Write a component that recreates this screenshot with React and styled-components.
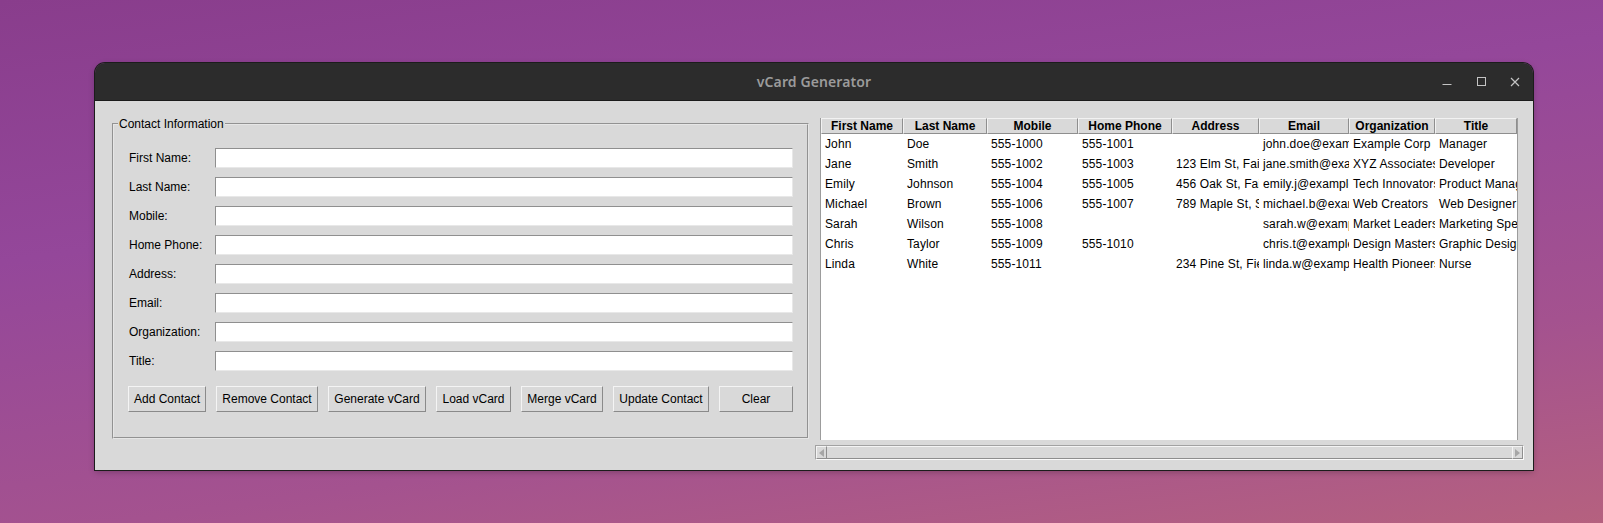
import React from "react";
import styled, { createGlobalStyle } from "styled-components";

const GlobalStyle = createGlobalStyle`
  html, body {
    margin: 0;
    padding: 0;
  }
  body {
    width: 1603px;
    height: 523px;
    overflow: hidden;
    font-family: "Liberation Sans", Arial, sans-serif;
    background: linear-gradient(172deg, #893d8c 0%, #94479a 35%, #a4528f 72%, #b5617f 100%);
  }
`;

const Desktop = styled.div`
  padding: 63px 0 0 95px;
`;

const Window = styled.div`
  width: 1438px;
  height: 407px;
  border-radius: 10px 10px 0 0;
  overflow: hidden;
  box-shadow: 0 0 0 1px #1c1c1c, 0 2px 6px rgba(0, 0, 0, 0.25);
  display: flex;
  flex-direction: column;
`;

const TitleBar = styled.div`
  height: 37px;
  flex: none;
  background: #2c2c2c;
  border-bottom: 1px solid #1b1b1b;
  display: grid;
  grid-template-columns: 1fr auto 1fr;
  align-items: center;
`;

const Title = styled.div`
  grid-column: 2;
  font-family: "Noto Sans", "Open Sans", sans-serif;
  font-weight: 600;
  font-size: 14px;
  color: #9b9b9b;
  letter-spacing: 0.1px;
`;

const Controls = styled.div`
  grid-column: 3;
  justify-self: end;
  display: flex;
  padding-right: 1px;
`;

const ControlButton = styled.div`
  width: 34px;
  height: 37px;
  display: flex;
  align-items: center;
  justify-content: center;
  color: #c4c4c4;
`;

const Body = styled.div`
  flex: 1;
  background: #d9d9d9;
  display: flex;
  align-items: flex-start;
`;

const Frame = styled.fieldset`
  box-sizing: border-box;
  margin: 16px 0 0 17px;
  padding: 17px 14px 0 14px;
  width: 697px;
  height: 322px;
  border: 2px groove #e6e6e6;
  min-inline-size: 0;
`;

const Legend = styled.legend`
  font-size: 12px;
  line-height: 14px;
  color: #000;
  padding: 0 1px;
  margin-left: -10px;
`;

const FormGrid = styled.div`
  display: grid;
  grid-template-columns: 87px 578px;
  row-gap: 9px;
  align-items: center;
`;

const Label = styled.label`
  font-size: 12px;
  color: #000;
  padding-left: 1px;
`;

const Entry = styled.div`
  box-sizing: border-box;
  height: 20px;
  background: #fff;
  border-top: 1px solid #8f8f8f;
  border-left: 1px solid #8f8f8f;
  border-bottom: 1px solid #e8e8e8;
  border-right: 1px solid #e8e8e8;
`;

const ButtonRow = styled.div`
  display: flex;
  gap: 10px;
  margin-top: 15px;
`;

const Button = styled.div`
  box-sizing: border-box;
  width: ${(p) => p.$w}px;
  height: 26px;
  display: flex;
  align-items: center;
  justify-content: center;
  font-size: 12px;
  color: #000;
  background: #d9d9d9;
  border-top: 1px solid #f4f4f4;
  border-left: 1px solid #f4f4f4;
  border-bottom: 1px solid #8a8a8a;
  border-right: 1px solid #8a8a8a;
  white-space: nowrap;
`;

const RightPanel = styled.div`
  margin: 17px 0 0 6px;
  width: 709px;
  display: flex;
  flex-direction: column;
  gap: 5px;
`;

const Tree = styled.div`
  box-sizing: border-box;
  margin-left: 5px;
  width: 698px;
  height: 322px;
  background: #fff;
  border-left: 1px solid #9c9c9c;
  border-right: 1px solid #9c9c9c;
`;

const TreeRow = styled.div`
  display: grid;
  grid-template-columns: 82px 84px 91px 94px 87px 90px 86px 82px;
  height: ${(p) => (p.$head ? 16 : 20)}px;
  align-items: center;
`;

const HeadCell = styled.div`
  box-sizing: border-box;
  height: 16px;
  background: #d9d9d9;
  border-top: 1px solid #f2f2f2;
  border-left: 1px solid #f2f2f2;
  border-bottom: 1px solid #8e8e8e;
  border-right: 1px solid #8e8e8e;
  font-size: 12px;
  font-weight: bold;
  line-height: 14px;
  text-align: center;
  overflow: hidden;
  white-space: nowrap;
`;

const Cell = styled.div`
  font-size: 12px;
  color: #000;
  padding-left: 4px;
  letter-spacing: 0.12px;
  overflow: hidden;
  white-space: nowrap;
`;

const Scrollbar = styled.div`
  box-sizing: border-box;
  height: 15px;
  display: flex;
  background: #d9d9d9;
  border-top: 1px solid #a2a2a2;
  border-left: 1px solid #a2a2a2;
  border-bottom: 1px solid #fafafa;
  border-right: 1px solid #fafafa;
`;

const ScrollArrow = styled.div`
  box-sizing: border-box;
  width: 11px;
  flex: none;
  display: flex;
  align-items: center;
  justify-content: center;
  border-top: 1px solid #f4f4f4;
  border-left: 1px solid #f4f4f4;
  border-bottom: 1px solid #8e8e8e;
  border-right: 1px solid #8e8e8e;
`;

const ScrollThumb = styled.div`
  flex: 1;
  box-sizing: border-box;
  border-top: 1px solid #f4f4f4;
  border-bottom: 1px solid #8e8e8e;
`;

const fields = [
  "First Name:",
  "Last Name:",
  "Mobile:",
  "Home Phone:",
  "Address:",
  "Email:",
  "Organization:",
  "Title:",
];

const buttons = [
  ["Add Contact", 78],
  ["Remove Contact", 102],
  ["Generate vCard", 98],
  ["Load vCard", 75],
  ["Merge vCard", 82],
  ["Update Contact", 96],
  ["Clear", 74],
];

const columns = [
  "First Name",
  "Last Name",
  "Mobile",
  "Home Phone",
  "Address",
  "Email",
  "Organization",
  "Title",
];

const contacts = [
  ["John", "Doe", "555-1000", "555-1001", "", "john.doe@example.com", "Example Corp", "Manager"],
  ["Jane", "Smith", "555-1002", "555-1003", "123 Elm St, Fairview", "jane.smith@example.com", "XYZ Associates", "Developer"],
  ["Emily", "Johnson", "555-1004", "555-1005", "456 Oak St, Fairview", "emily.j@example.com", "Tech Innovators", "Product Manager"],
  ["Michael", "Brown", "555-1006", "555-1007", "789 Maple St, Springfield", "michael.b@example.com", "Web Creators", "Web Designer"],
  ["Sarah", "Wilson", "555-1008", "", "", "sarah.w@example.com", "Market Leaders", "Marketing Specialist"],
  ["Chris", "Taylor", "555-1009", "555-1010", "", "chris.t@example.com", "Design Masters", "Graphic Designer"],
  ["Linda", "White", "555-1011", "", "234 Pine St, Fieldtown", "linda.w@example.com", "Health Pioneers", "Nurse"],
];

export default function App() {
  return (
    <>
      <GlobalStyle />
      <Desktop>
        <Window>
          <TitleBar>
            <Title>vCard Generator</Title>
            <Controls>
              <ControlButton>
                <svg width="10" height="10" viewBox="0 0 10 10">
                  <path d="M0.5 7.5h9" stroke="currentColor" strokeWidth="1" />
                </svg>
              </ControlButton>
              <ControlButton>
                <svg width="9" height="9" viewBox="0 0 9 9">
                  <rect x="0.5" y="0.5" width="8" height="8" fill="none" stroke="currentColor" strokeWidth="1" />
                </svg>
              </ControlButton>
              <ControlButton>
                <svg width="10" height="10" viewBox="0 0 10 10">
                  <path d="M1 1l8 8M9 1l-8 8" stroke="currentColor" strokeWidth="1.2" />
                </svg>
              </ControlButton>
            </Controls>
          </TitleBar>
          <Body>
            <Frame>
              <Legend>Contact Information</Legend>
              <FormGrid>
                {fields.map((f) => (
                  <React.Fragment key={f}>
                    <Label>{f}</Label>
                    <Entry />
                  </React.Fragment>
                ))}
              </FormGrid>
              <ButtonRow>
                {buttons.map(([text, w]) => (
                  <Button key={text} $w={w}>
                    {text}
                  </Button>
                ))}
              </ButtonRow>
            </Frame>
            <RightPanel>
              <Tree>
                <TreeRow $head>
                  {columns.map((c) => (
                    <HeadCell key={c}>{c}</HeadCell>
                  ))}
                </TreeRow>
                {contacts.map((row, i) => (
                  <TreeRow key={i}>
                    {row.map((v, j) => (
                      <Cell key={j}>{v}</Cell>
                    ))}
                  </TreeRow>
                ))}
              </Tree>
              <Scrollbar>
                <ScrollArrow>
                  <svg width="5" height="8" viewBox="0 0 5 8">
                    <path d="M5 0v8L0 4z" fill="#a6a6a6" />
                  </svg>
                </ScrollArrow>
                <ScrollThumb />
                <ScrollArrow>
                  <svg width="5" height="8" viewBox="0 0 5 8">
                    <path d="M0 0v8l5-4z" fill="#a6a6a6" />
                  </svg>
                </ScrollArrow>
              </Scrollbar>
            </RightPanel>
          </Body>
        </Window>
      </Desktop>
    </>
  );
}
